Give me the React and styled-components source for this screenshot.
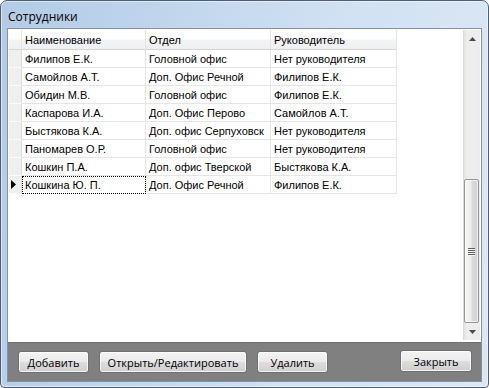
import styled, { createGlobalStyle } from 'styled-components';

const GlobalStyle = createGlobalStyle`
  html, body {
    margin: 0;
    padding: 0;
    background: #ffffff;
  }
  body {
    width: 489px;
    height: 388px;
    overflow: hidden;
  }
`;

const employees = [
  { name: 'Филипов Е.К.', dept: 'Головной офис', boss: 'Нет руководителя' },
  { name: 'Самойлов А.Т.', dept: 'Доп. Офис Речной', boss: 'Филипов Е.К.' },
  { name: 'Обидин М.В.', dept: 'Головной офис', boss: 'Филипов Е.К.' },
  { name: 'Каспарова И.А.', dept: 'Доп. Офис Перово', boss: 'Самойлов А.Т.' },
  { name: 'Быстякова К.А.', dept: 'Доп. офис Серпуховск', boss: 'Нет руководителя' },
  { name: 'Паномарев О.Р.', dept: 'Головной офис', boss: 'Нет руководителя' },
  { name: 'Кошкин П.А.', dept: 'Доп. офис Тверской', boss: 'Быстякова К.А.' },
  { name: 'Кошкина Ю. П.', dept: 'Доп. Офис Речной', boss: 'Филипов Е.К.', current: true },
];

const Window = styled.div`
  box-sizing: border-box;
  width: 489px;
  height: 388px;
  display: flex;
  flex-direction: column;
  padding: 0 6px 5px 6px;
  border: 1px solid #4d5f75;
  border-radius: 7px 7px 4px 4px;
  background: linear-gradient(100deg, #b3cbe7 0%, #c3d7ed 35%, #d2e2f3 65%, #dbe7f5 100%);
  box-shadow: inset 0 0 0 1px rgba(255, 255, 255, 0.5);
  font-family: "Liberation Sans", Arial, sans-serif;
`;

const TitleBar = styled.div`
  height: 27px;
  display: flex;
  align-items: center;
  padding: 3px 0 0 1px;
  box-sizing: border-box;
  font-family: "Open Sans", "Noto Sans", sans-serif;
  font-size: 12px;
  color: #000;
`;

const Client = styled.div`
  flex: 1;
  display: flex;
  flex-direction: column;
  border: 1px solid #7f92a8;
  background: #ffffff;
`;

const GridArea = styled.div`
  height: 313px;
  box-sizing: border-box;
  padding: 1px 1px 2px 1px;
  display: flex;
  background: #ffffff;
`;

const Table = styled.div`
  flex: 1;
  display: flex;
  flex-direction: column;
  background: #ffffff;
`;

const Row = styled.div`
  display: grid;
  grid-template-columns: 13px 124px 125px 126px;
  height: ${(p) => (p.$header ? 20 : 18)}px;
`;

const HeaderCell = styled.div`
  box-sizing: border-box;
  padding-left: 3px;
  display: flex;
  align-items: center;
  font-size: 11px;
  color: #000;
  white-space: nowrap;
  overflow: hidden;
  border-right: 1px solid #e2e3e5;
  border-bottom: 1px solid #d5d5d5;
  background: linear-gradient(to bottom, #ffffff 0%, #ffffff 45%, #f2f3f5 55%, #eef0f2 100%);
`;

const RowHead = styled.div`
  box-sizing: border-box;
  display: flex;
  align-items: center;
  padding-left: 2px;
  background: #efefef;
  border-right: 1px solid #dcdcdc;
  border-bottom: 1px solid #fbfbfb;
`;

const Cell = styled.div`
  box-sizing: border-box;
  padding-left: 3px;
  display: flex;
  align-items: center;
  font-size: 11px;
  color: #000;
  white-space: nowrap;
  overflow: hidden;
  border-right: 1px solid #e6e6e6;
  border-bottom: 1px solid #e6e6e6;
  outline: ${(p) => (p.$focused ? '1px dotted #000' : 'none')};
  outline-offset: -1px;
`;

const ScrollBar = styled.div`
  width: 17px;
  display: flex;
  flex-direction: column;
  background: linear-gradient(to right, #e3e3e3 0%, #eeeeee 20%, #ececec 100%);
  border-left: 1px solid #dadada;
  box-sizing: border-box;
`;

const ArrowButton = styled.div`
  height: 17px;
  display: flex;
  align-items: center;
  justify-content: center;
`;

const Track = styled.div`
  flex: 1;
  display: flex;
  flex-direction: column;
  padding-top: ${(p) => p.$offset}px;
  box-sizing: border-box;
`;

const Thumb = styled.div`
  box-sizing: border-box;
  width: 15px;
  border: 1px solid #979797;
  border-radius: 2px;
  background: linear-gradient(to right, #f7f7f7 0%, #ececec 45%, #dadada 55%, #d2d2d2 100%);
  box-shadow: inset 0 0 0 1px rgba(255, 255, 255, 0.6);
  display: flex;
  align-items: center;
  justify-content: center;
`;

const Grip = styled.div`
  display: flex;
  flex-direction: column;
  gap: 1px;
`;

const GripLine = styled.div`
  width: 7px;
  height: 1px;
  background: #5e5e5e;
  box-shadow: 0 1px 0 #f4f4f4;
`;

const BottomPanel = styled.div`
  flex: 1;
  display: flex;
  align-items: flex-start;
  gap: 10px;
  padding: 8px 9px 0 10px;
  background: #808080;
  border-top: 1px solid #6f6f6f;
`;

const Button = styled.button`
  box-sizing: border-box;
  width: ${(p) => p.$w}px;
  height: 22px;
  margin-top: ${(p) => (p.$raised ? -1 : 0)}px;
  margin-left: ${(p) => (p.$pushRight ? 'auto' : '0')};
  padding: 0;
  border: 1px solid #707070;
  border-radius: 3px;
  background: linear-gradient(to bottom, #f3f3f3 0%, #ebebeb 48%, #dddddd 52%, #cfcfcf 100%);
  box-shadow: inset 0 0 0 1px rgba(255, 255, 255, 0.75);
  font-family: "Open Sans", "Noto Sans", sans-serif;
  font-size: 11px;
  color: #000;
`;

const Triangle = ({ dir }) => (
  <svg width="7" height="4" viewBox="0 0 7 4">
    {dir === 'up' ? (
      <polygon points="3.5,0 7,4 0,4" fill="#4a4a4a" />
    ) : (
      <polygon points="0,0 7,0 3.5,4" fill="#4a4a4a" />
    )}
  </svg>
);

const RowMarker = () => (
  <svg width="5" height="9" viewBox="0 0 5 9">
    <polygon points="0,0 5,4.5 0,9" fill="#000" />
  </svg>
);

const App = () => {
  return (
    <>
      <GlobalStyle />
      <Window>
        <TitleBar>Сотрудники</TitleBar>
        <Client>
          <GridArea>
            <Table>
              <Row $header>
                <HeaderCell />
                <HeaderCell>Наименование</HeaderCell>
                <HeaderCell>Отдел</HeaderCell>
                <HeaderCell>Руководитель</HeaderCell>
              </Row>
              {employees.map((e) => (
                <Row key={e.name}>
                  <RowHead>{e.current && <RowMarker />}</RowHead>
                  <Cell $focused={e.current}>{e.name}</Cell>
                  <Cell>{e.dept}</Cell>
                  <Cell>{e.boss}</Cell>
                </Row>
              ))}
            </Table>
            <ScrollBar>
              <ArrowButton>
                <Triangle dir="up" />
              </ArrowButton>
              <Track $offset={132}>
                <Thumb style={{ height: 144 }}>
                  <Grip>
                    <GripLine />
                    <GripLine />
                    <GripLine />
                    <GripLine />
                  </Grip>
                </Thumb>
              </Track>
              <ArrowButton>
                <Triangle dir="down" />
              </ArrowButton>
            </ScrollBar>
          </GridArea>
          <BottomPanel>
            <Button $w={71}>Добавить</Button>
            <Button $w={148}>Открыть/Редактировать</Button>
            <Button $w={71}>Удалить</Button>
            <Button $w={72} $raised $pushRight>
              Закрыть
            </Button>
          </BottomPanel>
        </Client>
      </Window>
    </>
  );
};

export default App;
